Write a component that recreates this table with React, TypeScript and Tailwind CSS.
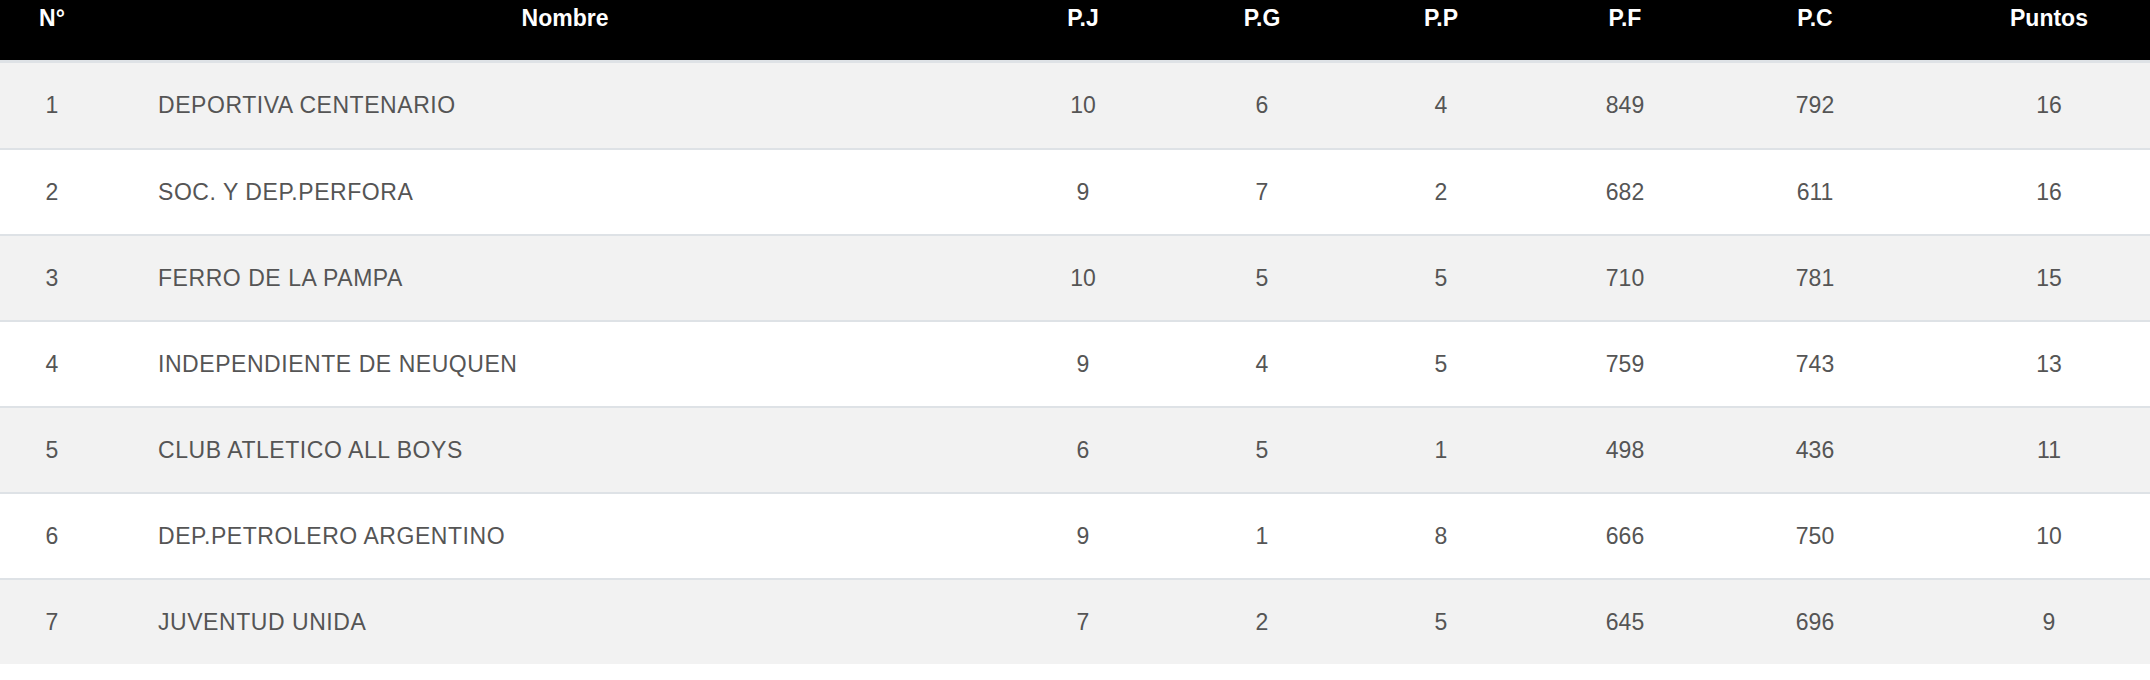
import React from "react";

const rows = [
  ["1", "DEPORTIVA CENTENARIO", "10", "6", "4", "849", "792", "16"],
  ["2", "SOC. Y DEP.PERFORA", "9", "7", "2", "682", "611", "16"],
  ["3", "FERRO DE LA PAMPA", "10", "5", "5", "710", "781", "15"],
  ["4", "INDEPENDIENTE DE NEUQUEN", "9", "4", "5", "759", "743", "13"],
  ["5", "CLUB ATLETICO ALL BOYS", "6", "5", "1", "498", "436", "11"],
  ["6", "DEP.PETROLERO ARGENTINO", "9", "1", "8", "666", "750", "10"],
  ["7", "JUVENTUD UNIDA", "7", "2", "5", "645", "696", "9"],
];

const cols = "grid grid-cols-[104px_852px_254px_104px_254px_114px_266px_202px]";

export default function App() {
  return (
    <div
      className="w-[2150px] h-[680px] bg-white"
      style={{ fontFamily: '"Liberation Sans", Arial, sans-serif' }}
    >
      <div className={`${cols} h-[58px] pt-[2px] bg-black text-white font-bold text-[23px] leading-[32px] border-b-[3px] border-[#dee2e6] box-content`}>
        <div className="text-center">N°</div>
        <div className="text-center pl-[70px]">Nombre</div>
        <div className="text-center">P.J</div>
        <div className="text-center">P.G</div>
        <div className="text-center">P.P</div>
        <div className="text-center">P.F</div>
        <div className="text-center">P.C</div>
        <div className="text-center">Puntos</div>
      </div>
      {rows.map((r, i) => (
        <div
          key={i}
          className={`${cols} items-center text-[23px] text-[#555555] ${
            i === 0 ? "h-[85px]" : "h-[86px] border-t-2 border-[#dee2e6]"
          } ${i % 2 === 0 ? "bg-[#f2f2f2]" : "bg-white"}`}
        >
          <div className="text-center">{r[0]}</div>
          <div className="pl-[54px] tracking-[0.55px]">{r[1]}</div>
          <div className="text-center">{r[2]}</div>
          <div className="text-center">{r[3]}</div>
          <div className="text-center">{r[4]}</div>
          <div className="text-center">{r[5]}</div>
          <div className="text-center">{r[6]}</div>
          <div className="text-center">{r[7]}</div>
        </div>
      ))}
    </div>
  );
}
